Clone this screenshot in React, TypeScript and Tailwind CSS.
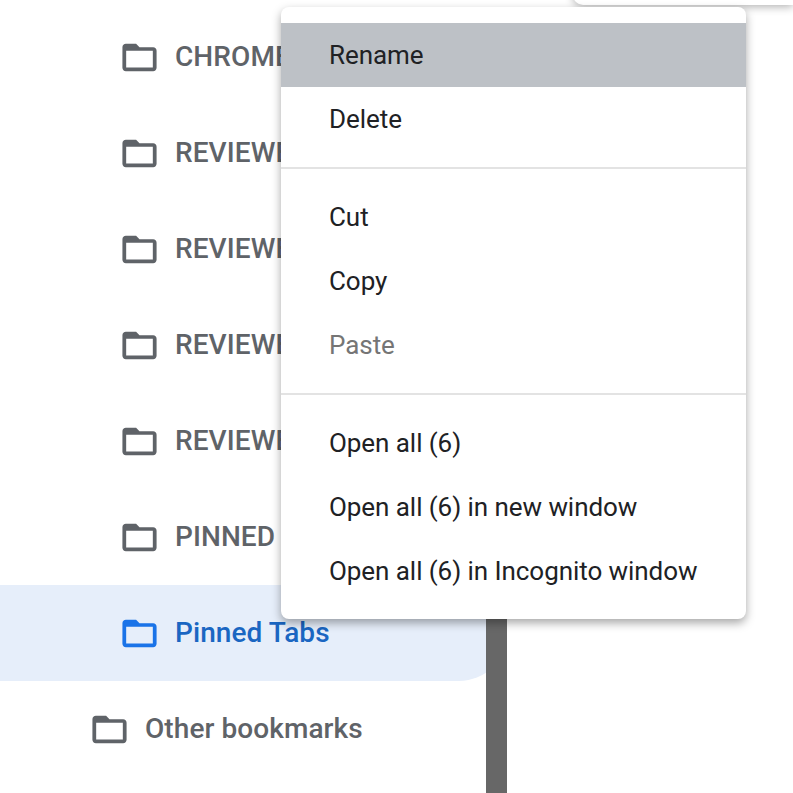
const folderPath = "M20 6h-8l-2-2H4c-1.1 0-1.99.9-1.99 2L2 18c0 1.1.9 2 2 2h16c1.1 0 2-.9 2-2V8c0-1.1-.9-2-2-2zm-.2 11.8H4.2V8.1h15.6v9.7z";

function Folder({ className }: { className: string }) {
  return (
    <svg viewBox="0 0 24 24" className={`h-[41px] w-[41px] shrink-0 fill-current ${className}`}>
      <path d={folderPath} />
    </svg>
  );
}

function Row({ label, selected, top, clip }: { label: string; selected?: boolean; top?: boolean; clip?: boolean }) {
  return (
    <div
      className={`flex h-24 items-center gap-[15px] whitespace-nowrap text-[28px] font-medium tracking-[0.08px] ${top ? "pl-[89px]" : "pl-[119px]"} ${
        selected ? "rounded-r-[48px] bg-[#e6eefa] text-[#1a66c2]" : "text-[#5f6368]"
      }`}
    >
      <Folder className={selected ? "text-[#1a73e8]" : "text-[#5f6368]"} />
      <span className={clip ? "w-[106px] overflow-hidden" : ""}>{label}</span>
    </div>
  );
}

function Item({ label, disabled, active }: { label: string; disabled?: boolean; active?: boolean }) {
  return (
    <div
      className={`flex h-16 items-center pl-12 text-[26px] tracking-[-0.06px] ${active ? "bg-[#bdc1c6]" : ""} ${
        disabled ? "text-[#757575]" : "text-[#202124]"
      }`}
    >
      {label}
    </div>
  );
}

function Divider() {
  return <div className="my-4 h-0.5 bg-[#e3e3e3]" />;
}

export default function App() {
  const rows = [
    "CHROME BOOKMARKS",
    "REVIEWED TABS",
    "REVIEWED LINKS",
    "REVIEWED SITES",
    "REVIEWED PAGES",
    "PINNED SITES",
  ];
  return (
    <div className="relative h-[793px] w-[793px] overflow-hidden bg-white font-['Roboto',sans-serif]">
      <div className="relative h-full w-[507px] overflow-hidden pt-[9px]">
        {rows.map((r) => (
          <Row key={r} label={r} clip />
        ))}
        <Row label="Pinned Tabs" selected />
        <Row label="Other bookmarks" top />
        <div className="absolute bottom-0 right-0 top-[7px] w-[21px] bg-[#676767]" />
      </div>

      <div className="absolute left-[573px] right-0 top-[-20px] h-[25px] rounded-bl-[10px] bg-white shadow-[0_2px_8px_rgba(0,0,0,0.3)]" />

      <div className="absolute left-[281px] top-[7px] w-[465px] rounded-lg bg-white py-4 shadow-[0_4px_10px_rgba(0,0,0,0.35)]">
        <Item label="Rename" active />
        <Item label="Delete" />
        <Divider />
        <Item label="Cut" />
        <Item label="Copy" />
        <Item label="Paste" disabled />
        <Divider />
        <Item label="Open all (6)" />
        <Item label="Open all (6) in new window" />
        <Item label="Open all (6) in Incognito window" />
      </div>
    </div>
  );
}
